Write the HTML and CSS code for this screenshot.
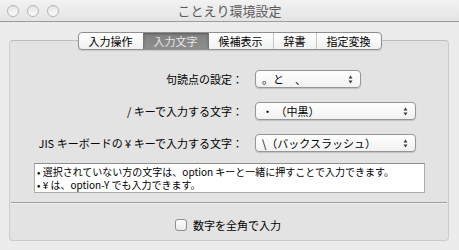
FILE: index.html
```html
<!DOCTYPE html>
<html lang="ja">
<head>
    <meta charset="UTF-8">
    <title>ことえり環境設定</title>
    <link rel="stylesheet" href="styles.css">
</head>
<body>
<div class="window">
    <header class="titlebar">
        <div class="lights"><span></span><span></span><span></span></div>
        <div class="title">ことえり環境設定</div>
        <div></div>
    </header>
    <main class="pane">
        <nav class="tabs">
            <span class="tab">入力操作</span>
            <span class="tab active">入力文字</span>
            <span class="tab">候補表示</span>
            <span class="tab">辞書</span>
            <span class="tab">指定変換</span>
        </nav>
        <section class="group">
            <div class="form">
                <label class="label">句読点の設定：</label>
                <div class="popup short">
                    <span>。と　、</span>
                    <svg class="arrows" width="5" height="9" viewBox="0 0 5 9"><path d="M0.5 3.5 L2.5 0.5 L4.5 3.5Z M0.5 5.5 L2.5 8.5 L4.5 5.5Z"/></svg>
                </div>
                <label class="label">/ キーで入力する文字：</label>
                <div class="popup">
                    <span>・ （中黒）</span>
                    <svg class="arrows" width="5" height="9" viewBox="0 0 5 9"><path d="M0.5 3.5 L2.5 0.5 L4.5 3.5Z M0.5 5.5 L2.5 8.5 L4.5 5.5Z"/></svg>
                </div>
                <label class="label">JIS キーボードの ¥ キーで入力する文字：</label>
                <div class="popup">
                    <span>\（バックスラッシュ）</span>
                    <svg class="arrows" width="5" height="9" viewBox="0 0 5 9"><path d="M0.5 3.5 L2.5 0.5 L4.5 3.5Z M0.5 5.5 L2.5 8.5 L4.5 5.5Z"/></svg>
                </div>
            </div>
            <div class="note">
                <p>• 選択されていない方の文字は、option キーと一緒に押すことで入力できます。</p>
                <p>• ¥ は、option-Y でも入力できます。</p>
            </div>
            <hr class="sep">
            <label class="check"><span class="box"></span>数字を全角で入力</label>
        </section>
    </main>
</div>
</body>
</html>
```

FILE: styles.css
```css
body {
    margin: 0;
    font-family: "Noto Sans CJK JP", "Noto Sans", sans-serif;
    font-size: 11px;
    color: #000;
    background: #ececec;
}
.window {
    width: 459px;
    height: 250px;
    background: #ececec;
    overflow: hidden;
}
.titlebar {
    height: 22px;
    box-sizing: border-box;
    border-bottom: 1px solid #9c9c9c;
    background: linear-gradient(#f2f2f2, #e4e4e4);
    display: grid;
    grid-template-columns: 1fr auto 1fr;
    align-items: center;
}
.lights {
    display: flex;
    gap: 8px;
    padding-left: 7px;
}
.lights span {
    width: 10px;
    height: 10px;
    border-radius: 50%;
    border: 1px solid #b4b4b4;
    background: linear-gradient(#e6e6e6, #fafafa);
}
.title {
    font-size: 13px;
    line-height: 16px;
    color: #5a5a5a;
}
.pane {
    padding-top: 10px;
    display: flex;
    flex-direction: column;
}
.tabs {
    align-self: center;
    position: relative;
    z-index: 1;
    display: flex;
    height: 18px;
    box-sizing: border-box;
    border: 1px solid #8e8e8e;
    border-radius: 4px;
    background: linear-gradient(#ffffff, #f1f1f1);
    box-shadow: 0 1px 1px rgba(0, 0, 0, 0.12);
    overflow: hidden;
}
.tab {
    padding: 0 10px;
    line-height: 16px;
    border-left: 1px solid #c6c6c6;
}
.tab:first-child {
    border-left: none;
}
.tab.active {
    background: linear-gradient(#7f7f7f, #8f8f8f);
    color: #e6e6e6;
    border-left-color: #777;
    box-shadow: inset 0 1px 2px rgba(0, 0, 0, 0.3);
}
.tab.active + .tab {
    border-left-color: #777;
}
.group {
    margin: -10px 10px 0 9px;
    height: 201px;
    box-sizing: border-box;
    border: 1px solid #cbcbcb;
    border-top-color: #bdbdbd;
    border-radius: 4px;
    background: #e3e3e3;
    padding-top: 29px;
}
.form {
    display: grid;
    grid-template-columns: 233px auto;
    column-gap: 12px;
    row-gap: 14px;
    align-items: center;
}
.label {
    text-align: right;
    line-height: 14px;
}
.popup {
    width: 161px;
    height: 18px;
    box-sizing: border-box;
    border: 1px solid #969696;
    border-radius: 4px;
    background: linear-gradient(#ffffff, #f2f2f2);
    box-shadow: 0 1px 1px rgba(0, 0, 0, 0.15);
    display: flex;
    align-items: center;
    justify-content: space-between;
    padding: 0 7px 0 6px;
    line-height: 14px;
}
.popup.short {
    width: 106px;
}
.arrows {
    fill: #3a3a3a;
}
.note {
    margin: 11px 0 0 24px;
    width: 391px;
    height: 30px;
    box-sizing: border-box;
    border: 1px solid #ababab;
    border-top-color: #8e8e8e;
    background: #fff;
    padding: 1px 2px;
    font-size: 10px;
    white-space: nowrap;
    overflow: hidden;
}
.note p {
    margin: 0;
    line-height: 13px;
}
.sep {
    margin: 9px 1px 0;
    border: none;
    border-top: 1px solid #9e9e9e;
    border-bottom: 1px solid #f0f0f0;
    height: 0;
}
.check {
    margin-top: 14px;
    display: flex;
    justify-content: center;
    align-items: center;
    gap: 6px;
    line-height: 14px;
    padding-right: 2px;
}
.box {
    width: 10px;
    height: 10px;
    border: 1px solid #8e8e8e;
    border-radius: 3px;
    background: linear-gradient(#fdfdfd, #eaeaea);
}
```
